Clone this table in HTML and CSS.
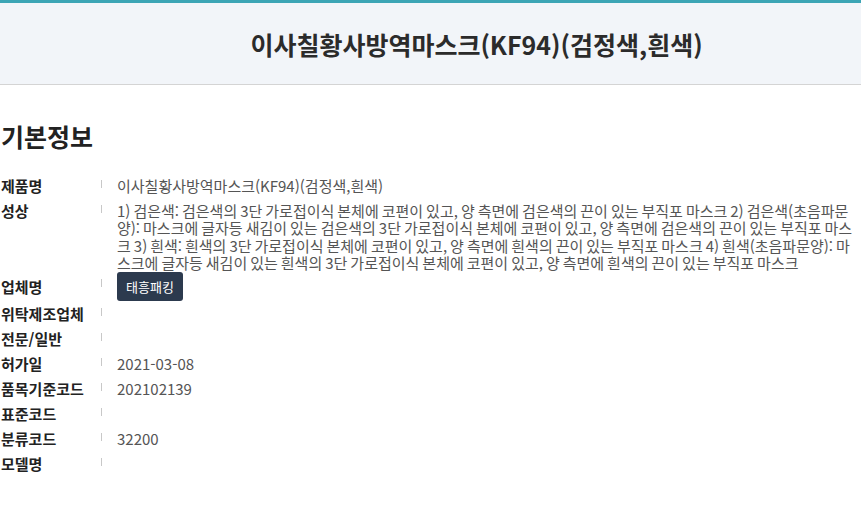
FILE: index.html
```html
<!DOCTYPE html>
<html lang="ko">

<head>
  <meta charset="UTF-8">
  <title>이사칠황사방역마스크(KF94)(검정색,흰색)</title>
  <link rel="stylesheet" href="styles.css">
</head>

<body>
  <div class="top">
    <h1 class="title">이사칠황사방역마스크(KF94)(검정색,흰색)</h1>
  </div>

  <div class="content">
    <h2 class="section">기본정보</h2>

    <div class="info">
      <div class="row">
        <div class="label">제품명</div>
        <div class="value">이사칠황사방역마스크(KF94)(검정색,흰색)</div>
      </div>
      <div class="row">
        <div class="label">성상</div>
        <div class="value">1) 검은색: 검은색의 3단 가로접이식 본체에 코편이 있고, 양 측면에 검은색의 끈이 있는 부직포 마스크 2) 검은색(초음파문양): 마스크에 글자등 새김이 있는 검은색의 3단 가로접이식 본체에 코편이 있고, 양 측면에 검은색의 끈이 있는 부직포 마스크 3) 흰색: 흰색의 3단 가로접이식 본체에 코편이 있고, 양 측면에 흰색의 끈이 있는 부직포 마스크 4) 흰색(초음파문양): 마스크에 글자등 새김이 있는 흰색의 3단 가로접이식 본체에 코편이 있고, 양 측면에 흰색의 끈이 있는 부직포 마스크</div>
      </div>
      <div class="row row-company">
        <div class="label">업체명</div>
        <div class="value"><a class="company" href="#">태흥패킹</a></div>
      </div>
      <div class="row">
        <div class="label">위탁제조업체</div>
        <div class="value"></div>
      </div>
      <div class="row">
        <div class="label">전문/일반</div>
        <div class="value"></div>
      </div>
      <div class="row">
        <div class="label">허가일</div>
        <div class="value">2021-03-08</div>
      </div>
      <div class="row">
        <div class="label">품목기준코드</div>
        <div class="value">202102139</div>
      </div>
      <div class="row">
        <div class="label">표준코드</div>
        <div class="value"></div>
      </div>
      <div class="row">
        <div class="label">분류코드</div>
        <div class="value">32200</div>
      </div>
      <div class="row">
        <div class="label">모델명</div>
        <div class="value"></div>
      </div>
    </div>
  </div>
</body>

</html>
```

FILE: styles.css
```css
body {
  margin: 0;
  font-family: "Noto Sans CJK KR", "Noto Sans", sans-serif;
  color: #222;
  background: #fff;
}

.top {
  border-top: 3px solid #3ca5b5;
  border-bottom: 1px solid #d4d4d4;
  background: #f2f5f9;
  height: 81px;
  padding-left: 92px;
  display: flex;
  align-items: center;
  justify-content: center;
}

.title {
  margin: 0;
  font-size: 25px;
  font-weight: bold;
  color: #2b2b2b;
}

.content {
  padding: 0 0 0 1px;
}

.section {
  margin: 34px 0 20px;
  font-size: 25px;
  line-height: 34px;
  font-weight: bold;
  color: #222;
}

.row {
  display: flex;
  align-items: flex-start;
}

.row-company {
  align-items: center;
}

.label {
  width: 100px;
  flex: none;
  font-size: 15px;
  font-weight: bold;
  line-height: 25px;
  color: #222;
}

.value {
  position: relative;
  flex: 1;
  padding: 3.75px 0 0 16px;
  font-size: 15px;
  line-height: 17.5px;
  word-spacing: -1.2px;
  color: #555;
}

.value::before {
  content: "";
  position: absolute;
  left: 0;
  top: 7px;
  width: 1px;
  height: 8px;
  background: #c8c8c8;
}

.row-company .value {
  padding-top: 0;
}

.company {
  display: inline-block;
  height: 29px;
  line-height: 29px;
  padding: 0 9px;
  border-radius: 3px;
  background: #2c3a4e;
  color: #fff;
  font-size: 13px;
  text-decoration: none;
}
```
